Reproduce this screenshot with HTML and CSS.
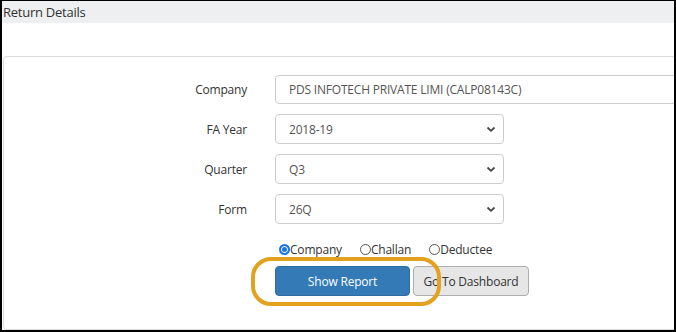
FILE: index.html
```html
<!DOCTYPE html>
<html>
<head>
<meta charset="utf-8">
<link rel="stylesheet" href="styles.css">
</head>
<body>
<div class="frame">
  <div class="header">Return Details</div>
  <div class="panel">
    <div class="form">
      <label class="lbl">Company</label>
      <div class="input wide">PDS INFOTECH PRIVATE LIMI (CALP08143C)</div>
      <label class="lbl">FA Year</label>
      <div class="input select"><span>2018-19</span><svg class="chev" width="10" height="7" viewBox="0 0 10 7"><path d="M1.5 1.5 L5 4.8 L8.5 1.5" fill="none" stroke="#444" stroke-width="1.8"/></svg></div>
      <label class="lbl">Quarter</label>
      <div class="input select"><span>Q3</span><svg class="chev" width="10" height="7" viewBox="0 0 10 7"><path d="M1.5 1.5 L5 4.8 L8.5 1.5" fill="none" stroke="#444" stroke-width="1.8"/></svg></div>
      <label class="lbl">Form</label>
      <div class="input select"><span>26Q</span><svg class="chev" width="10" height="7" viewBox="0 0 10 7"><path d="M1.5 1.5 L5 4.8 L8.5 1.5" fill="none" stroke="#444" stroke-width="1.8"/></svg></div>
      <div class="radios">
        <span class="radio"><span class="dot checked"></span>Company</span>
        <span class="radio"><span class="dot"></span>Challan</span>
        <span class="radio"><span class="dot"></span>Deductee</span>
      </div>
      <div class="buttons">
        <button class="btn primary">Show Report</button>
        <button class="btn default">Go To Dashboard</button>
        <span class="highlight"></span>
      </div>
    </div>
  </div>
</div>
</body>
</html>
```

FILE: styles.css
```css
html, body {
  margin: 0;
  padding: 0;
  background: #fff;
}
body {
  width: 676px;
  height: 332px;
  overflow: hidden;
  font-family: "Open Sans", "Noto Sans", sans-serif;
  letter-spacing: -0.2px;
}
.frame {
  box-sizing: border-box;
  width: 676px;
  height: 332px;
  border-top: 1px solid #000;
  border-left: 2px solid #000;
  border-right: 2px solid #000;
  border-bottom: 2px solid #000;
  overflow: hidden;
  position: relative;
}
.header {
  height: 22px;
  background: #eeeff0;
  color: #333;
  font-size: 13px;
  letter-spacing: -0.25px;
  line-height: 22px;
  padding-left: 1px;
}
.panel {
  box-sizing: border-box;
  margin: 33px 0 0 1px;
  width: 720px;
  height: 274px;
  border: 1px solid #dcdcdc;
  border-radius: 4px;
  background: #fff;
}
.form {
  display: grid;
  grid-template-columns: 243px auto;
  column-gap: 28px;
  row-gap: 10px;
  padding-top: 18px;
  align-items: center;
}
.lbl {
  text-align: right;
  font-size: 12px;
  color: #333;
}
.input {
  box-sizing: border-box;
  height: 30px;
  border: 1px solid #ccc;
  border-radius: 4px;
  font-size: 12px;
  color: #555;
  padding: 0 12px 0 13px;
  display: flex;
  align-items: center;
  justify-content: space-between;
}
.wide {
  width: 500px;
  border-radius: 4px 0 0 4px;
  height: 29px;
}
.select {
  width: 229px;
}
.chev {
  margin-right: -5px;
}
.radios {
  grid-column: 2;
  display: flex;
  gap: 18px;
  font-size: 12px;
  color: #333;
  margin-top: 7px;
  padding-left: 4px;
}
.radio {
  display: flex;
  align-items: center;
}
.dot {
  box-sizing: border-box;
  width: 11px;
  height: 11px;
  border-radius: 50%;
  border: 1px solid #555;
}
.dot.checked {
  border: 2px solid #1a73e8;
  background: #1a73e8;
  box-shadow: inset 0 0 0 1px #fff;
}
.buttons {
  grid-column: 2;
  display: flex;
  gap: 3px;
  margin-top: -2px;
  position: relative;
}
.btn {
  box-sizing: border-box;
  height: 30px;
  border-radius: 4px;
  font-family: "Open Sans", "Noto Sans", sans-serif;
  font-size: 12px;
  letter-spacing: -0.2px;
  padding: 0;
}
.primary {
  width: 135px;
  background: #337ab7;
  border: 1px solid #2e6da4;
  color: #fff;
}
.default {
  width: 116px;
  background: #e6e6e6;
  border: 1px solid #adadad;
  color: #333;
}
.highlight {
  position: absolute;
  left: -24px;
  top: -9px;
  width: 190px;
  height: 49px;
  box-sizing: border-box;
  border: 4px solid #e2a21f;
  border-radius: 20px;
}
```
